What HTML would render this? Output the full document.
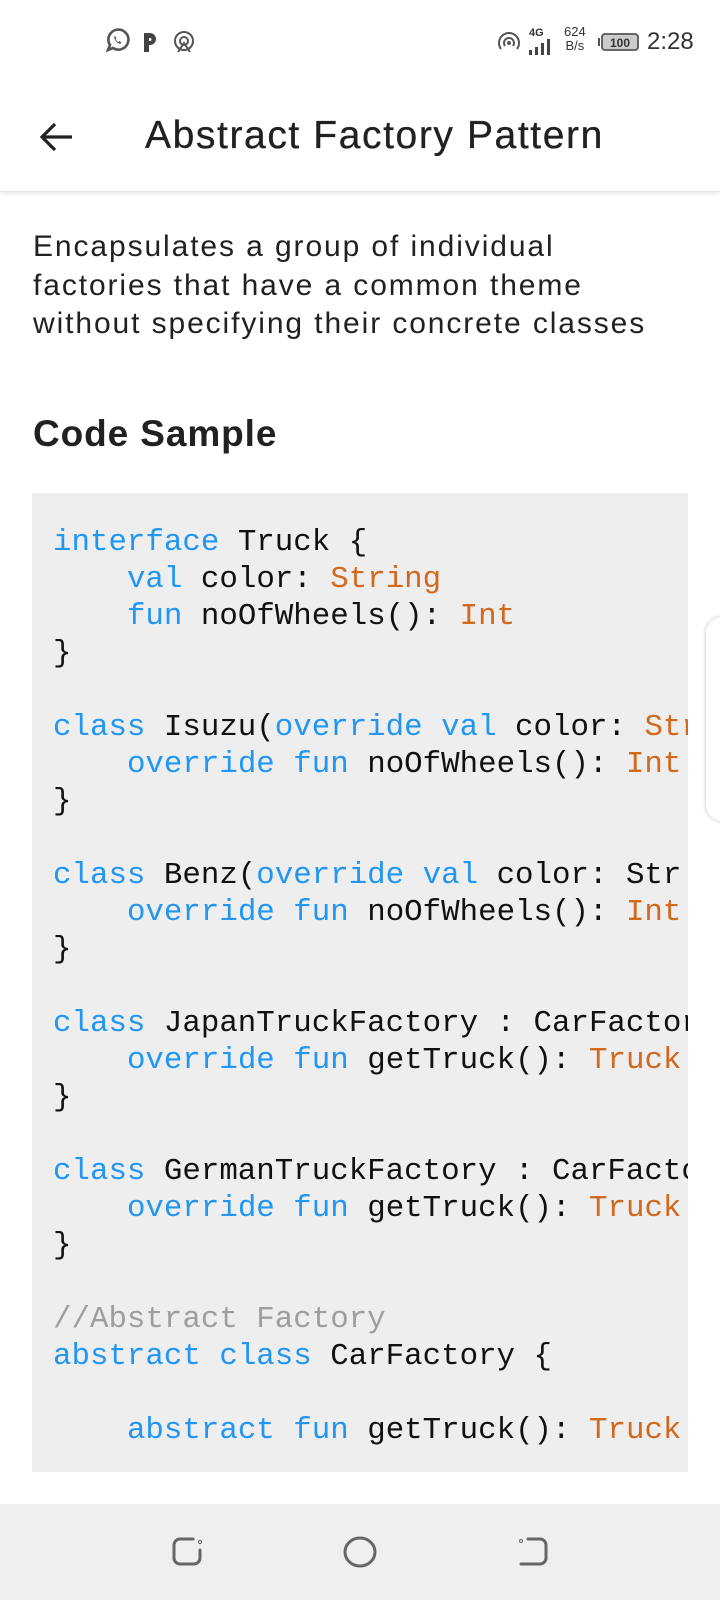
<!DOCTYPE html>
<html><head><meta charset="utf-8"><style>
*{margin:0;padding:0;box-sizing:border-box}
body{width:720px;height:1600px;background:#fff;position:relative;overflow:hidden;font-family:"Liberation Sans",sans-serif;color:#212121}
.abs{position:absolute}
.sb{font-family:"Liberation Sans",sans-serif;color:#333}
.title{left:145px;top:114px;font-size:39px;letter-spacing:1.6px;white-space:nowrap;color:#212121;-webkit-text-stroke:0.3px #212121}
.hdr{left:0;top:0;width:720px;height:192px;border-bottom:1px solid #e4e4e4;box-shadow:0 2px 4px rgba(0,0,0,0.08)}
.desc{left:33px;top:228px;font-size:30px;letter-spacing:1.9px;line-height:38.7px;color:#212121;white-space:nowrap}
.cs{left:33px;top:413px;font-size:37px;letter-spacing:0.9px;font-weight:bold;color:#212121}
.code{left:32px;top:493px;width:656px;height:979px;background:#eeeeee;overflow:hidden}
pre{position:absolute;left:21px;top:31px;font-family:"Liberation Mono",monospace;font-size:30.8px;line-height:37px;color:#111;white-space:pre}
.k{color:#2196f3}.t{color:#d2691e}.c{color:#9e9e9e}
.nav{left:0;top:1504px;width:720px;height:96px;background:#efefef}
</style></head><body>
<div class="abs hdr"></div>
<svg class="abs" style="left:104px;top:28px" width="95" height="28" viewBox="0 0 95 28">
<g fill="none" stroke="#555" stroke-width="2.6">
<path d="M4 22 L6 17 A10 10 0 1 1 9 20 Z"/>
</g>
<path d="M10 9 q1 5 6 7 l1.5-1.5 -2-1.5 -1 1 q-2-1-3-3 l1-1 -1.5-2z" fill="#555"/>
<path d="M40 24 V5 h6 a6 6 0 0 1 0 12 h-1 V24z M45 10 v3 h1 a1.5 1.5 0 0 0 0-3z" fill="#444" fill-rule="evenodd"/>
<g fill="none" stroke="#555" stroke-width="2"><circle cx="80" cy="13" r="9"/><circle cx="80" cy="13" r="4"/><path d="M74 24 L80 15 L86 24"/></g>
</svg>
<svg class="abs" style="left:496px;top:30px" width="26" height="26" viewBox="0 0 26 26"><g fill="none" stroke="#555" stroke-width="2"><path d="M5 19 A10 10 0 1 1 21 19"/><path d="M9 16 A5 5 0 1 1 17 16"/></g><circle cx="13" cy="13" r="2" fill="#555"/></svg>
<div class="abs sb" style="left:529px;top:27px;font-size:11px;font-weight:bold">4G</div>
<svg class="abs" style="left:528px;top:38px" width="26" height="18"><rect x="1" y="12" width="3" height="5" fill="#444"/><rect x="7" y="9" width="3" height="8" fill="#444"/><rect x="13" y="5" width="3" height="12" fill="#444"/><rect x="19" y="1" width="3" height="16" fill="#444"/></svg>
<div class="abs sb" style="left:564px;top:25px;font-size:13px;line-height:14px;text-align:center">624<br>B/s</div>
<svg class="abs" style="left:598px;top:32px" width="42" height="20"><rect x="0" y="6" width="2" height="8" fill="#555"/><rect x="4" y="2" width="36" height="16" rx="3" fill="#ccc" stroke="#555" stroke-width="1.8"/><text x="22" y="15" font-size="12" text-anchor="middle" font-family="Liberation Sans" font-weight="bold" fill="#333">100</text></svg>
<div class="abs sb" style="left:647px;top:28px;font-size:24px;color:#333">2:28</div>
<svg class="abs" style="left:38px;top:120px" width="36" height="34" viewBox="0 0 36 34"><g fill="none" stroke="#212121" stroke-width="3.2"><path d="M34 17 H5"/><path d="M17 4 L4 17 L17 30"/></g></svg>
<div class="abs title">Abstract Factory Pattern</div>
<div class="abs desc">Encapsulates a group of individual<br>factories that have a common theme<br>without specifying their concrete classes</div>
<div class="abs cs">Code Sample</div>
<div class="abs code"><pre><span class="k">interface</span> Truck {
    <span class="k">val</span> color: <span class="t">String</span>
    <span class="k">fun</span> noOfWheels(): <span class="t">Int</span>
}

<span class="k">class</span> Isuzu(<span class="k">override</span> <span class="k">val</span> color: <span class="t">String</span>
    <span class="k">override</span> <span class="k">fun</span> noOfWheels(): <span class="t">Int</span>
}

<span class="k">class</span> Benz(<span class="k">override</span> <span class="k">val</span> color: Str
    <span class="k">override</span> <span class="k">fun</span> noOfWheels(): <span class="t">Int</span>
}

<span class="k">class</span> JapanTruckFactory : CarFactory
    <span class="k">override</span> <span class="k">fun</span> getTruck(): <span class="t">Truck</span>
}

<span class="k">class</span> GermanTruckFactory : CarFactory
    <span class="k">override</span> <span class="k">fun</span> getTruck(): <span class="t">Truck</span>
}

<span class="c">//Abstract Factory</span>
<span class="k">abstract</span> <span class="k">class</span> CarFactory {

    <span class="k">abstract</span> <span class="k">fun</span> getTruck(): <span class="t">Truck</span></pre></div>
<div class="abs" style="left:706px;top:617px;width:40px;height:204px;background:#fff;border-radius:16px;box-shadow:0 0 4px rgba(0,0,0,0.25)"></div>
<div class="abs nav"></div>
<svg class="abs" style="left:160px;top:1528px" width="400" height="50" viewBox="0 0 400 50"><g fill="none" stroke="#666" stroke-width="3" stroke-linecap="round">
<path d="M33 11 H20 a6 6 0 0 0 -6 6 V30 a6 6 0 0 0 6 6 H34 a6 6 0 0 0 6 -6 V22"/>
<circle cx="40" cy="14" r="0.5"/>
<ellipse cx="200" cy="24" rx="15" ry="14"/>
<path d="M368 11 H380 a6 6 0 0 1 6 6 V30 a6 6 0 0 1 -6 6 H361"/>
<circle cx="361" cy="13" r="0.5"/>
</g></svg>
</body></html>
